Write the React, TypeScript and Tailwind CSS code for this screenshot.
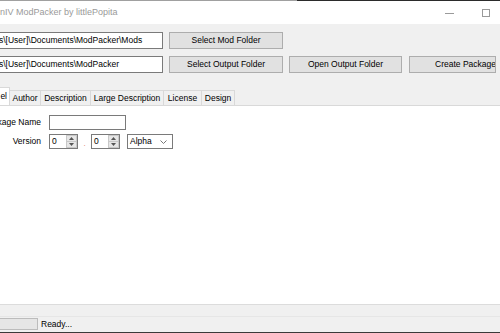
import React from "react";

const font = { fontFamily: '"Liberation Sans", Arial, sans-serif' };

function Btn({ w, label }: { w: string; label: string }) {
  return (
    <div
      className={`${w} h-[17px] shrink-0 bg-[#e1e1e1] border border-[#adadad] flex items-center justify-center overflow-hidden whitespace-nowrap text-[8.5px] text-black`}
    >
      {label}
    </div>
  );
}

function Spinner() {
  return (
    <div className="w-[11px] h-full flex flex-col">
      <div className="flex-1 bg-[#e6e6e6] border border-[#c8c8c8] flex items-center justify-center">
        <svg width="5" height="3" viewBox="0 0 5 3"><path d="M0 3 L2.5 0 L5 3Z" fill="#555" /></svg>
      </div>
      <div className="flex-1 bg-[#e6e6e6] border border-t-0 border-[#c8c8c8] flex items-center justify-center">
        <svg width="5" height="3" viewBox="0 0 5 3"><path d="M0 0 L2.5 3 L5 0Z" fill="#555" /></svg>
      </div>
    </div>
  );
}

function Numeric({ w }: { w: string }) {
  return (
    <div className={`${w} h-[15px] bg-white border border-[#7a7a7a] flex items-stretch`}>
      <div className="flex-1 pl-[2px] text-[8.5px] leading-[13px]">0</div>
      <Spinner />
    </div>
  );
}

export default function App() {
  const tabs = ["Author", "Description", "Large Description", "License", "Design"];
  const tabW = ["w-[31px]", "w-[50px]", "w-[73px]", "w-[38px]", "w-[33px]"];
  return (
    <div className="w-[500px] h-[333px] bg-[#f0f0f0] flex flex-col overflow-hidden text-black" style={font}>
      <div className="h-px flex shrink-0">
        <div className="w-[297px] bg-[#a0a0a0]" />
        <div className="flex-1 bg-[#2b2b2b]" />
      </div>
      <div className="h-[23px] bg-white flex items-center shrink-0">
        <div className="text-[9px] text-[#9a9a9a] whitespace-nowrap pt-[1px]">nIV ModPacker by littlePopita</div>
        <div className="flex-1" />
        <div className="w-[9px] h-px bg-[#9a9a9a] mr-[28px] mt-[1px]" />
        <div className="w-[8px] h-[8px] border border-[#9a9a9a] mr-[10px]" />
      </div>

      <div className="flex flex-col gap-[7px] pt-[8px] shrink-0">
        <div className="flex items-center gap-[6px]">
          <div className="w-[163px] h-[17px] shrink-0 bg-white border border-l-0 border-[#7a7a7a] flex items-center overflow-hidden whitespace-nowrap text-[8.5px]">
            <span className="-ml-[1px]">s\[User]\Documents\ModPacker\Mods</span>
          </div>
          <Btn w="w-[114px]" label="Select Mod Folder" />
        </div>
        <div className="flex items-center gap-[6px]">
          <div className="w-[163px] h-[17px] shrink-0 bg-white border border-l-0 border-[#7a7a7a] flex items-center overflow-hidden whitespace-nowrap text-[8.5px]">
            <span className="-ml-[1px]">s\[User]\Documents\ModPacker</span>
          </div>
          <Btn w="w-[114px]" label="Select Output Folder" />
          <Btn w="w-[113px]" label="Open Output Folder" />
          <div className="w-[87px] h-[17px] shrink-0 overflow-hidden border-r border-[#adadad] ml-px">
            <Btn w="w-[113px]" label="Create Package" />
          </div>
        </div>
      </div>

      <div className="flex items-end mt-[14px] h-[18px] shrink-0">
        <div className="w-[10px] h-[18px] bg-white border-t border-r border-[#d9d9d9] flex items-center justify-end overflow-hidden text-[8.5px] whitespace-nowrap pr-[2px]">
          <span>el</span>
        </div>
        {tabs.map((t, i) => (
          <div
            key={t}
            className={`${tabW[i]} h-[15px] shrink-0 bg-[#f0f0f0] border-t border-r border-[#d9d9d9] flex items-center justify-center text-[8.5px] whitespace-nowrap`}
          >
            {t}
          </div>
        ))}
      </div>

      <div className="h-[199px] bg-white border-t border-[#d9d9d9] shrink-0 flex flex-col pt-[9px]">
        <div className="flex items-center h-[15px]">
          <div className="w-[49px] text-[8.5px] whitespace-nowrap overflow-hidden flex justify-end pr-[8px]">
            <span className="whitespace-nowrap">ckage Name</span>
          </div>
          <div className="w-[77px] h-[15px] bg-white border border-[#7a7a7a]" />
        </div>
        <div className="flex items-center h-[15px] mt-[4px]">
          <div className="w-[49px] text-[8.5px] flex justify-end pr-[8px]">Version</div>
          <Numeric w="w-[29px]" />
          <div className="w-[13px] flex justify-center text-[8px] text-[#e07a5f] leading-none pt-[4px]">.</div>
          <Numeric w="w-[29px]" />
          <div className="w-[7px]" />
          <div className="w-[46px] h-[15px] bg-white border border-[#7a7a7a] flex items-center text-[8.5px] pl-[2px]">
            <span className="flex-1">Alpha</span>
            <svg width="7" height="4" viewBox="0 0 7 4" className="mr-[5px]">
              <path d="M0.5 0.5 L3.5 3.5 L6.5 0.5" stroke="#777" fill="none" strokeWidth="1" />
            </svg>
          </div>
        </div>
      </div>

      <div className="h-[12px] border-t border-[#dcdcdc] bg-[#f0f0f0] shrink-0" />
      <div className="flex-1 flex items-center border-t border-[#e6e6e6] pb-[1px]">
        <div className="w-[38px] h-[12px] bg-[#e6e6e6] border border-l-0 border-[#bcbcbc]" />
        <div className="text-[8.5px] ml-[3px]">Ready...</div>
      </div>
      <div className="h-px bg-[#3a3a3a] shrink-0" />
    </div>
  );
}
